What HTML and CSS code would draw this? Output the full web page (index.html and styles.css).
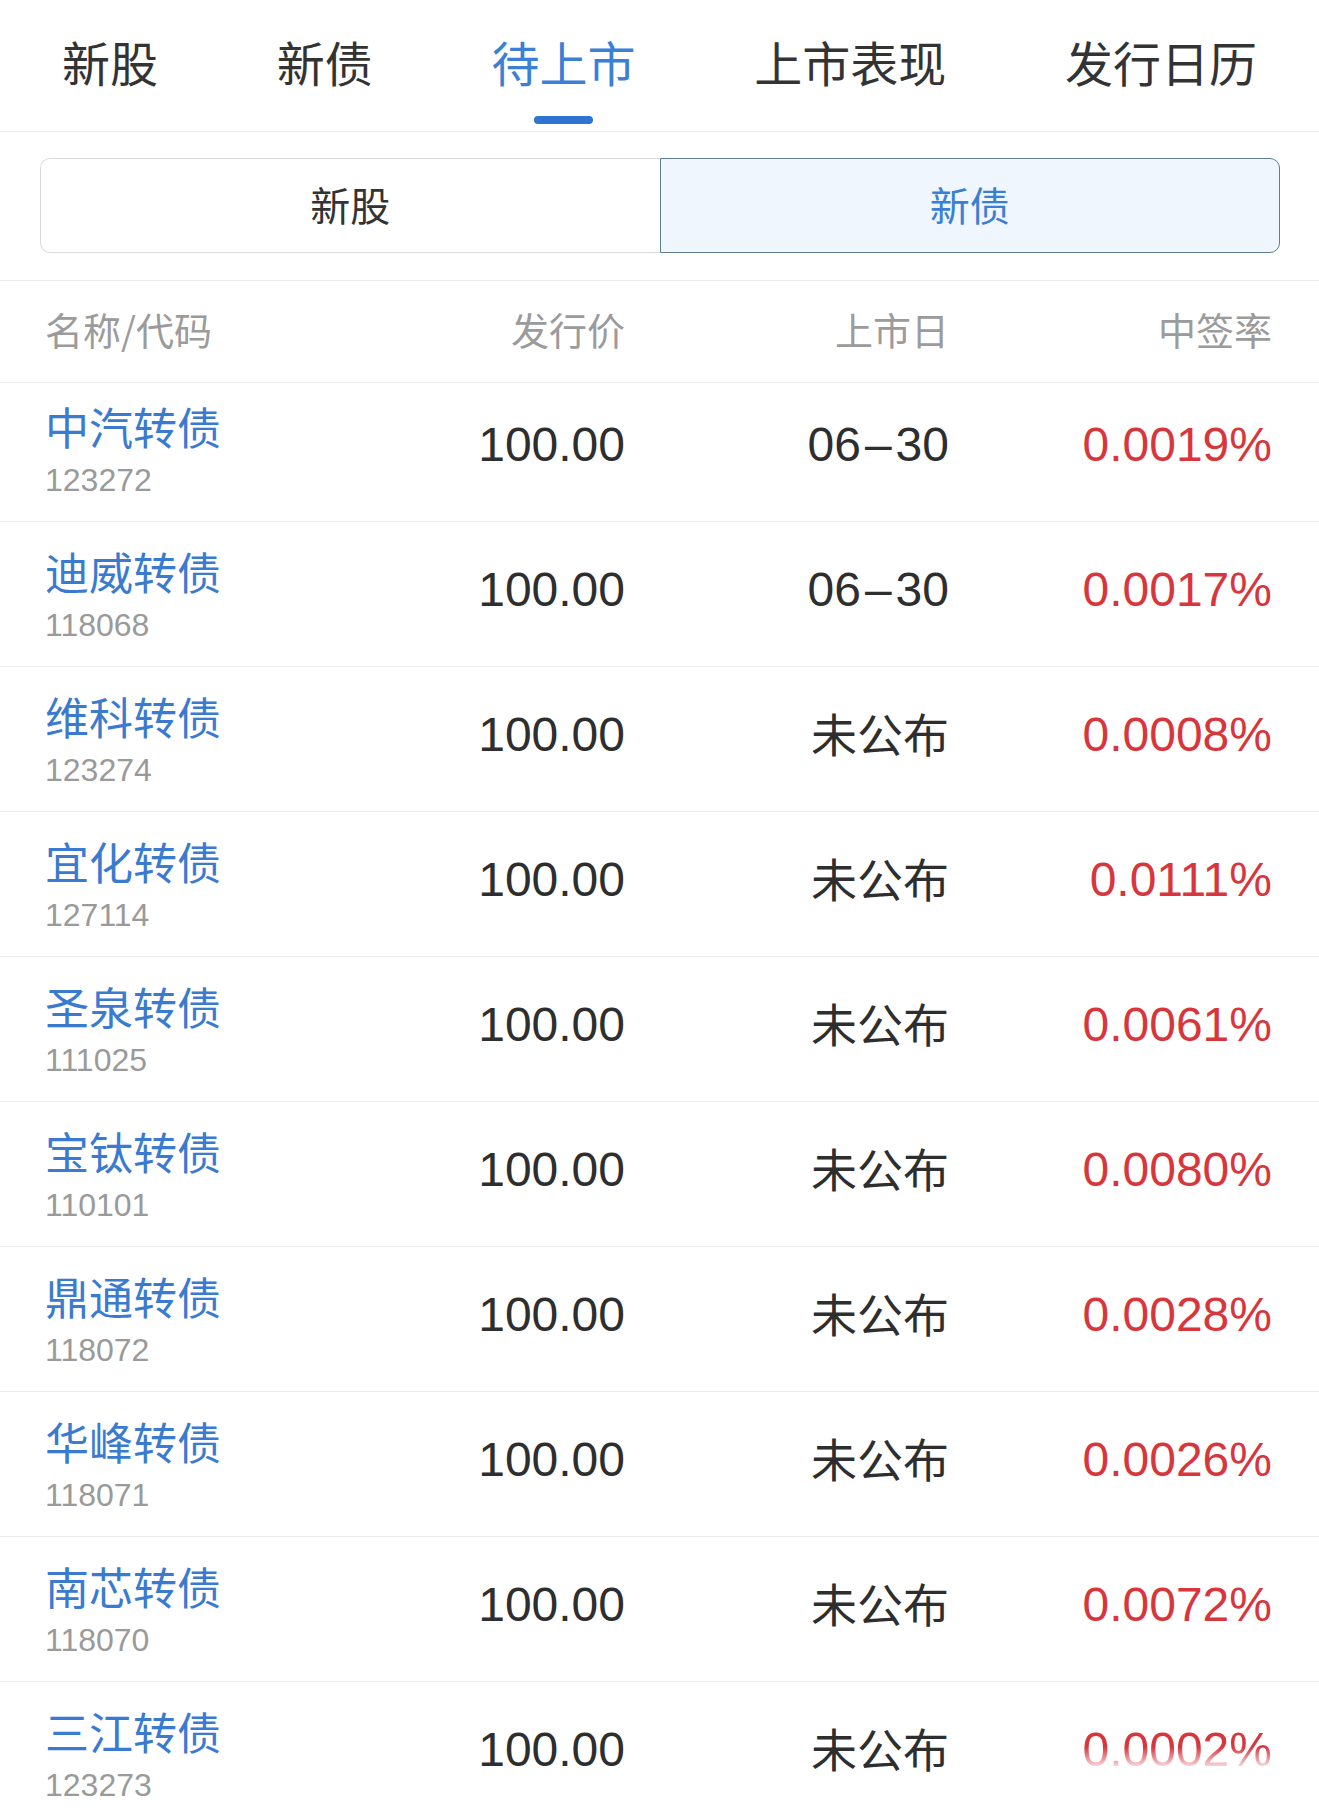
FILE: index.html
```html
<!DOCTYPE html>
<html lang="zh-CN">
<head>
<meta charset="utf-8">
<title>待上市 - 新债</title>
<link rel="stylesheet" href="styles.css">
</head>
<body>
<div class="page">
  <nav class="tabs">
    <div class="tab"><span class="tab-label">新股</span><span class="tab-bar"></span></div>
    <div class="tab"><span class="tab-label">新债</span><span class="tab-bar"></span></div>
    <div class="tab active"><span class="tab-label">待上市</span><span class="tab-bar"></span></div>
    <div class="tab"><span class="tab-label">上市表现</span><span class="tab-bar"></span></div>
    <div class="tab"><span class="tab-label">发行日历</span><span class="tab-bar"></span></div>
  </nav>

  <section class="seg-wrap">
    <div class="segment">
      <div class="seg-item">新股</div>
      <div class="seg-item selected">新债</div>
    </div>
  </section>

  <div class="table-head">
    <div class="th th-name">名称/代码</div>
    <div class="th">发行价</div>
    <div class="th">上市日</div>
    <div class="th">中签率</div>
  </div>

  <div class="list">
    <div class="row first">
      <div class="name-cell"><div class="name">中汽转债</div><div class="code">123272</div></div>
      <div class="val num">100.00</div>
      <div class="val num">06<span class="dash">–</span>30</div>
      <div class="val num rate">0.0019%</div>
    </div>
    <div class="row">
      <div class="name-cell"><div class="name">迪威转债</div><div class="code">118068</div></div>
      <div class="val num">100.00</div>
      <div class="val num">06<span class="dash">–</span>30</div>
      <div class="val num rate">0.0017%</div>
    </div>
    <div class="row">
      <div class="name-cell"><div class="name">维科转债</div><div class="code">123274</div></div>
      <div class="val num">100.00</div>
      <div class="val cjk">未公布</div>
      <div class="val num rate">0.0008%</div>
    </div>
    <div class="row">
      <div class="name-cell"><div class="name">宜化转债</div><div class="code">127114</div></div>
      <div class="val num">100.00</div>
      <div class="val cjk">未公布</div>
      <div class="val num rate">0.0111%</div>
    </div>
    <div class="row">
      <div class="name-cell"><div class="name">圣泉转债</div><div class="code">111025</div></div>
      <div class="val num">100.00</div>
      <div class="val cjk">未公布</div>
      <div class="val num rate">0.0061%</div>
    </div>
    <div class="row">
      <div class="name-cell"><div class="name">宝钛转债</div><div class="code">110101</div></div>
      <div class="val num">100.00</div>
      <div class="val cjk">未公布</div>
      <div class="val num rate">0.0080%</div>
    </div>
    <div class="row">
      <div class="name-cell"><div class="name">鼎通转债</div><div class="code">118072</div></div>
      <div class="val num">100.00</div>
      <div class="val cjk">未公布</div>
      <div class="val num rate">0.0028%</div>
    </div>
    <div class="row">
      <div class="name-cell"><div class="name">华峰转债</div><div class="code">118071</div></div>
      <div class="val num">100.00</div>
      <div class="val cjk">未公布</div>
      <div class="val num rate">0.0026%</div>
    </div>
    <div class="row">
      <div class="name-cell"><div class="name">南芯转债</div><div class="code">118070</div></div>
      <div class="val num">100.00</div>
      <div class="val cjk">未公布</div>
      <div class="val num rate">0.0072%</div>
    </div>
    <div class="row">
      <div class="name-cell"><div class="name">三江转债</div><div class="code">123273</div></div>
      <div class="val num">100.00</div>
      <div class="val cjk">未公布</div>
      <div class="val num rate"><span class="smear">0.0002%</span></div>
    </div>
  </div>
</div>
</body>
</html>
```

FILE: styles.css
```css
html, body {
  margin: 0;
  padding: 0;
  background: #ffffff;
}

body {
  width: 1319px;
  height: 1817px;
  overflow: hidden;
  font-family: "Noto Sans CJK SC", "Liberation Sans", sans-serif;
  color: #333333;
}

.page {
  width: 1319px;
}

/* top tabs */
.tabs {
  display: flex;
  justify-content: space-between;
  padding: 0 62px;
  height: 131px;
  border-bottom: 1px solid #ececec;
}

.tab {
  display: flex;
  flex-direction: column;
  align-items: center;
  padding-top: 29px;
}

.tab-label {
  font-size: 48px;
  line-height: 64px;
  color: #333333;
}

.tab-bar {
  width: 59px;
  height: 8px;
  margin-top: 23px;
  border-radius: 4px;
  background: transparent;
}

.tab.active .tab-label {
  color: #3b80d6;
}

.tab.active .tab-bar {
  background: #2f74d0;
}

/* segmented control */
.seg-wrap {
  padding: 26px 39px 27px 40px;
  border-bottom: 1px solid #ededed;
}

.segment {
  display: flex;
  height: 95px;
}

.seg-item {
  flex: 1;
  display: flex;
  align-items: center;
  justify-content: center;
  font-size: 40px;
  color: #333333;
  border: 1px solid #d9d9d9;
  border-right: none;
  border-radius: 10px 0 0 10px;
  padding-bottom: 4px;
}

.seg-item.selected {
  color: #3b7fd3;
  background: #f0f6fd;
  border: 1px solid #5f7d92;
  border-radius: 0 10px 10px 0;
}

/* table header */
.table-head,
.row {
  display: grid;
  grid-template-columns: 380px 200px 324px 1fr;
  padding: 0 47px 0 45px;
}

.table-head {
  align-items: center;
  padding-bottom: 6px;
  box-sizing: border-box;
  height: 102px;
  border-bottom: 1px solid #ededed;
}

.th {
  font-size: 38px;
  line-height: 48px;
  color: #9b9b9b;
  text-align: right;
}

.th.th-name {
  text-align: left;
}

/* rows */
.row {
  align-items: start;
  padding-top: 23px;
  box-sizing: content-box;
  height: 121px;
  border-bottom: 1px solid #ededed;
}

.row.first {
  padding-top: 17px;
}

.name {
  font-size: 44px;
  line-height: 52px;
  color: #3a7bd0;
}

.code {
  margin-top: 8px;
  font-family: "Liberation Sans", "Noto Sans CJK SC", sans-serif;
  font-size: 32px;
  line-height: 40px;
  color: #9a9a9a;
}

.val {
  margin-top: 15px;
  line-height: 60px;
  text-align: right;
  color: #2e2e2e;
  white-space: nowrap;
}

.val.num {
  font-family: "Liberation Sans", "Noto Sans CJK SC", sans-serif;
  font-size: 48px;
}

.dash {
  padding: 0 4px;
}

.val.cjk {
  font-size: 46px;
  line-height: 56px;
  margin-top: 14px;
}

.val.rate {
  color: #d8363d;
}

.smear {
  display: inline-block;
  -webkit-mask-image: linear-gradient(to bottom, #000 0%, #000 45%, rgba(0,0,0,0.25) 75%, transparent 100%);
  mask-image: linear-gradient(to bottom, #000 0%, #000 45%, rgba(0,0,0,0.25) 75%, transparent 100%);
}
```
